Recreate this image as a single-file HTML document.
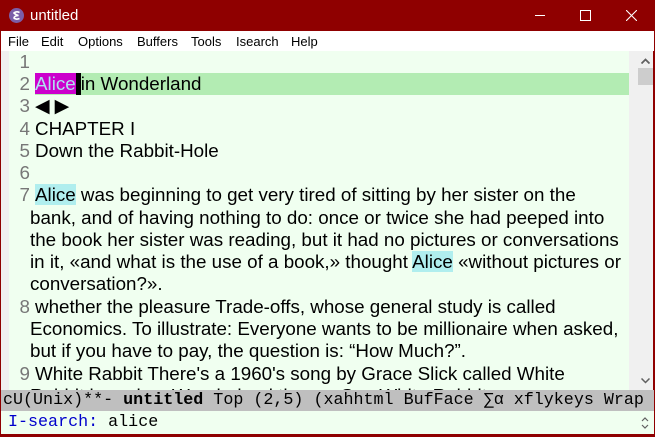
<!DOCTYPE html>
<html><head><style>
*{margin:0;padding:0}
body{width:655px;height:437px;position:relative;overflow:hidden;background:#8f0000;font-family:"Liberation Sans",sans-serif}
#title{position:absolute;left:0;top:0;width:655px;height:31px;background:#8f0000;color:#fff;font-size:15px}
#menu{position:absolute;left:1px;top:31px;width:653px;height:20px;background:#fff;font-size:13px;color:#000}
#menu span{position:absolute;top:3px}
#edit{position:absolute;left:1px;top:51px;width:636px;height:339px;background:#f0f0f0}
#text{position:absolute;left:9px;top:51px;width:620px;height:339px;background:#f0fff0;overflow:hidden}
.l{position:absolute;left:0;font-size:18.8px;line-height:22px;white-space:pre;color:#000}
.n{position:absolute;width:21px;text-align:right;color:#777;font-size:18.8px;line-height:22px}
#sb{position:absolute;left:637px;top:51px;width:16px;height:339px;background:#f0f0f0}
#mode{position:absolute;left:1px;top:390px;width:653px;height:21px;background:#bfbfbf;font-family:"Liberation Mono","DejaVu Sans Mono",monospace;font-size:16.7px;line-height:21px;white-space:pre;color:#000}
#mini{position:absolute;left:1px;top:411px;width:653px;height:23px;background:#f0fff0;font-family:"Liberation Mono","DejaVu Sans Mono",monospace;font-size:16.7px;line-height:23px;white-space:pre}
.hl{background:#b0eeee}
</style></head><body>
<div id="title">
<svg style="position:absolute;left:9px;top:8px" width="15" height="15"><circle cx="7.5" cy="7.5" r="7.5" fill="#7b5ea8"/><path d="M10.5 4.5Q7 3 5 5Q7 7 9.5 7.5Q5 8 5 10Q7 12 10.5 10.5" stroke="#fff" stroke-width="1.6" fill="none"/></svg>
<span style="position:absolute;left:30px;top:7px">untitled</span>
<div style="position:absolute;left:535px;top:15px;width:10px;height:1px;background:#fff"></div>
<div style="position:absolute;left:580px;top:10px;width:9px;height:9px;border:1px solid #fff"></div>
<svg style="position:absolute;left:626px;top:10px" width="11" height="11"><path d="M0 0L11 11M11 0L0 11" stroke="#fff" stroke-width="1.1"/></svg>
</div>
<div id="menu"><span style="left:7px">File</span><span style="left:40px">Edit</span><span style="left:77px">Options</span><span style="left:136px">Buffers</span><span style="left:190px">Tools</span><span style="left:235px">Isearch</span><span style="left:290px">Help</span></div>
<div id="edit"></div>
<div id="text">
<div style="position:absolute;left:26px;top:22px;width:594px;height:22px;background:#b3ecb3"></div>
<div class="n" style="left:0;top:0">1</div>
<div class="n" style="left:0;top:22px">2</div>
<div class="l" style="left:26px;top:22px"><span style="background:#cc00cc;color:#b0e0f0">Alice</span><span style="background:#000;display:inline-block;width:5px;height:22px;vertical-align:top"></span>in Wonderland</div>
<div class="n" style="left:0;top:44px">3</div>
<div class="l" style="left:26px;top:44px">◀ ▶</div>
<div class="n" style="left:0;top:67px">4</div>
<div class="l" style="left:26px;top:67px">CHAPTER I</div>
<div class="n" style="left:0;top:89px">5</div>
<div class="l" style="left:26px;top:89px">Down the Rabbit-Hole</div>
<div class="n" style="left:0;top:111px">6</div>
<div class="n" style="left:0;top:133px">7</div>
<div class="l" style="left:26px;top:133px"><span class="hl">Alice</span> was beginning to get very tired of sitting by her sister on the</div>
<div class="l" style="left:21px;top:156px">bank, and of having nothing to do: once or twice she had peeped into</div>
<div class="l" style="left:21px;top:178px">the book her sister was reading, but it had no pictures or conversations</div>
<div class="l" style="left:21px;top:200px">in it, «and what is the use of a book,» thought <span class="hl">Alice</span> «without pictures or</div>
<div class="l" style="left:21px;top:222px">conversation?».</div>
<div class="n" style="left:0;top:245px">8</div>
<div class="l" style="left:26px;top:245px">whether the pleasure Trade-offs, whose general study is called</div>
<div class="l" style="left:21px;top:267px">Economics. To illustrate: Everyone wants to be millionaire when asked,</div>
<div class="l" style="left:21px;top:289px">but if you have to pay, the question is: “How Much?”.</div>
<div class="n" style="left:0;top:312px">9</div>
<div class="l" style="left:26px;top:312px">White Rabbit There's a 1960's song by Grace Slick called White</div>
<div class="l" style="left:21px;top:334px">Rabbit based on Wonderland theme. See White Rabbit</div>
</div>
<div id="sb">
<svg style="position:absolute;left:4px;top:7px" width="9" height="6"><path d="M0.5 5.5L4.5 1.5L8.5 5.5" stroke="#606060" stroke-width="1.8" fill="none"/></svg>
<div style="position:absolute;left:1px;top:17px;width:15px;height:17px;background:#cdcdcd"></div>
<svg style="position:absolute;left:4px;top:327px" width="9" height="6"><path d="M0.5 0.5L4.5 4.5L8.5 0.5" stroke="#606060" stroke-width="1.5" fill="none"/></svg>
</div>
<div id="mode"><span style="margin-left:2px">cU(Unix)**- <b>untitled</b> Top (2,5) (xahhtml BufFace ∑α xflykeys Wrap</span></div>
<div id="mini"><span style="margin-left:7px;color:#0000cc">I-search:</span> alice<svg style="position:absolute;left:640px;top:5px" width="8" height="14"><path d="M1 5L4 2L7 5M1 9L4 12L7 9" stroke="#606060" stroke-width="1.2" fill="none"/></svg></div>
</body></html>
